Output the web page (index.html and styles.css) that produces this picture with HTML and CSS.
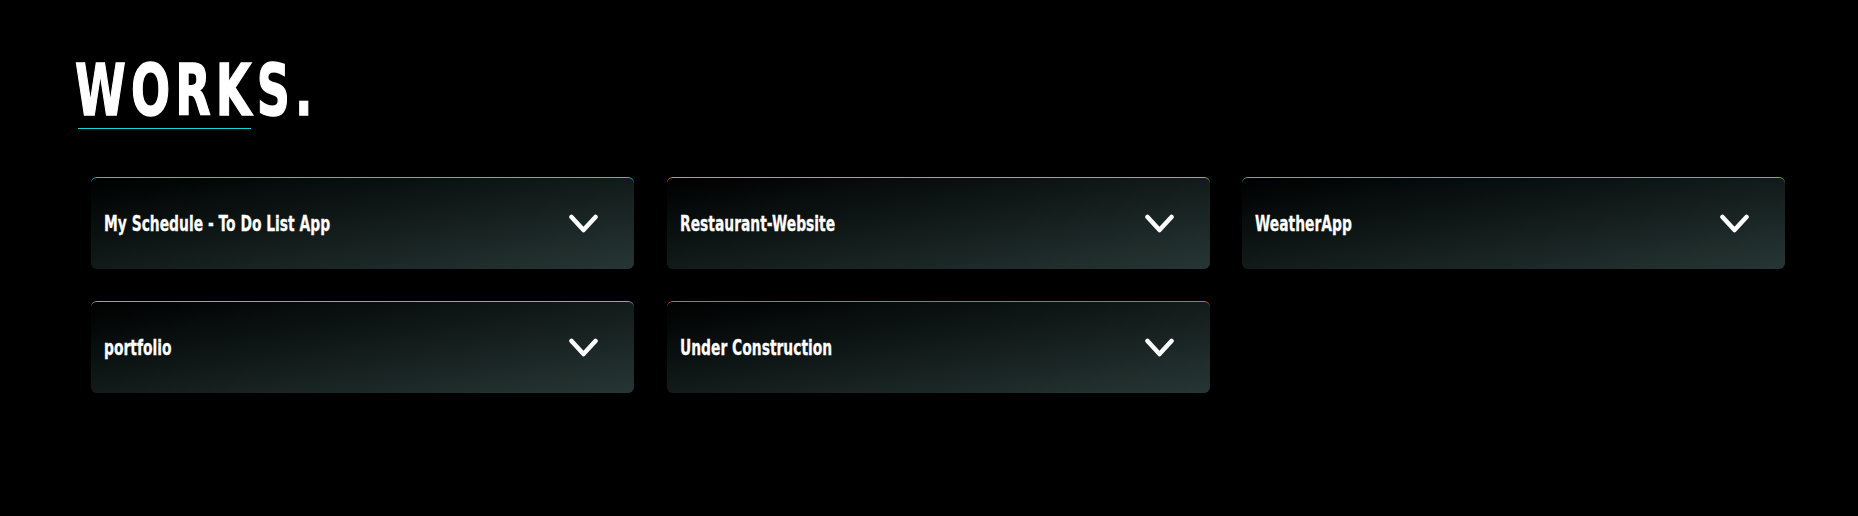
FILE: index.html
```html
<!DOCTYPE html>
<html lang="en">
<head>
<meta charset="utf-8">
<title>Works</title>
<link rel="stylesheet" href="styles.css">
</head>
<body>
<section class="works">
  <h1 class="title"><span class="title-text">WORKS.</span></h1>
  <div class="grid">
    <div class="card c-cyan"><span class="name">My Schedule - To Do List App</span><svg class="chev" viewBox="0 0 30 20"><path d="M3 3 L15 16 L27 3"/></svg></div>
    <div class="card c-orange"><span class="name">Restaurant-Website</span><svg class="chev" viewBox="0 0 30 20"><path d="M3 3 L15 16 L27 3"/></svg></div>
    <div class="card c-green"><span class="name">WeatherApp</span><svg class="chev" viewBox="0 0 30 20"><path d="M3 3 L15 16 L27 3"/></svg></div>
    <div class="card c-purple"><span class="name">portfolio</span><svg class="chev" viewBox="0 0 30 20"><path d="M3 3 L15 16 L27 3"/></svg></div>
    <div class="card c-red"><span class="name">Under Construction</span><svg class="chev" viewBox="0 0 30 20"><path d="M3 3 L15 16 L27 3"/></svg></div>
  </div>
</section>
</body>
</html>
```
FILE: styles.css
```css
html, body {
  margin: 0;
  background: #000;
}
.works {
  padding: 50px 0 0 75px;
  font-family: "DejaVu Sans", "Liberation Sans", sans-serif;
  color: #fff;
}
.title {
  margin: 0;
  display: block;
  font-size: 72px;
  line-height: 80px;
  font-weight: 700;
  position: relative;
}
.title-text {
  display: inline-block;
  letter-spacing: 8px;
  -webkit-text-stroke: 1.5px #fff;
  transform: scaleX(0.64);
  transform-origin: left center;
}
.title::after {
  content: "";
  position: absolute;
  left: 3px;
  top: 78px;
  width: 173px;
  height: 1px;
  background: #12d6dc;
}
.grid {
  margin: 47px 0 0 16px;
  display: grid;
  grid-template-columns: repeat(3, 543px);
  column-gap: 32.5px;
  row-gap: 32px;
}
.card {
  height: 92px;
  box-sizing: border-box;
  border-radius: 6px;
  border-top: 1px solid;
  background: linear-gradient(to bottom right, #000 0%, #0a1010 30%, #263634 100%);
  display: flex;
  align-items: center;
  justify-content: space-between;
  padding: 0 35px 0 13px;
}
.c-cyan { border-top-color: #17cfd6; }
.c-orange { border-top-color: #e29a1c; }
.c-green { border-top-color: #52c466; }
.c-purple { border-top-color: #a58fe0; }
.c-red { border-top-color: #f0552e; }
.name {
  display: inline-block;
  font-size: 22px;
  font-weight: 700;
  -webkit-text-stroke: 0.3px #fff;
  transform: scaleX(0.63);
  transform-origin: left center;
}
.chev {
  width: 31px;
  height: 20px;
  flex: none;
  fill: none;
  stroke: #fff;
  stroke-width: 4.5;
  stroke-linecap: round;
  stroke-linejoin: round;
}
```
